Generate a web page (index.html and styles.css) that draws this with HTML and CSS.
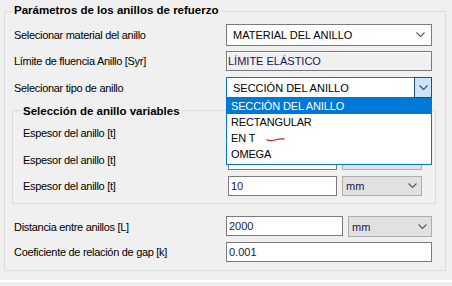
FILE: index.html
```html
<!DOCTYPE html>
<html>
<head>
    <link rel="stylesheet" href="styles.css">
</head>
<body>
    <div class="group outer">
        <div class="group-title">Parámetros de los anillos de refuerzo</div>

        <div class="row r1">
            <label class="lbl">Selecionar material del anillo</label>
            <div class="combo w-full h22">
                <span class="combo-text">MATERIAL DEL ANILLO</span>
                <span class="arrow"><svg width="9" height="5" viewBox="0 0 9 5"><polyline points="0.5,0.5 4.5,4.5 8.5,0.5" fill="none" stroke="#5a5a5a" stroke-width="1.1"/></svg></span>
            </div>
        </div>

        <div class="row r2">
            <label class="lbl">Límite de fluencia Anillo [Syr]</label>
            <div class="readonly w-full">LÍMITE ELÁSTICO</div>
        </div>

        <div class="row r3">
            <label class="lbl">Selecionar tipo de anillo</label>
            <div class="combo focus w-full h21">
                <span class="combo-text">SECCIÓN DEL ANILLO</span>
                <span class="btn"><svg width="9" height="5" viewBox="0 0 9 5"><polyline points="0.5,0.5 4.5,4.5 8.5,0.5" fill="none" stroke="#4a4a4a" stroke-width="1.1"/></svg></span>
                <ul class="list">
                    <li class="sel">SECCIÓN DEL ANILLO</li>
                    <li>RECTANGULAR</li>
                    <li>EN T <svg class="squiggle" width="19" height="5" viewBox="0 0 19 5"><path d="M0.5,2.5 Q4,4.5 9,3 T18.5,2" fill="none" stroke="#e0201c" stroke-width="1.3"/></svg></li>
                    <li>OMEGA</li>
                </ul>
            </div>
        </div>

        <div class="group inner">
            <div class="group-title">Selección de anillo variables</div>

            <div class="row i1">
                <label class="lbl">Espesor del anillo [t]</label>
                <div class="textbox w-small"></div>
                <div class="combo gray w-unit">
                    <span class="combo-text">mm</span>
                    <span class="arrow"><svg width="9" height="5" viewBox="0 0 9 5"><polyline points="0.5,0.5 4.5,4.5 8.5,0.5" fill="none" stroke="#5a5a5a" stroke-width="1.1"/></svg></span>
                </div>
            </div>
            <div class="row i2">
                <label class="lbl">Espesor del anillo [t]</label>
                <div class="textbox w-small"></div>
                <div class="combo gray w-unit">
                    <span class="combo-text">mm</span>
                    <span class="arrow"><svg width="9" height="5" viewBox="0 0 9 5"><polyline points="0.5,0.5 4.5,4.5 8.5,0.5" fill="none" stroke="#5a5a5a" stroke-width="1.1"/></svg></span>
                </div>
            </div>
            <div class="row i3">
                <label class="lbl">Espesor del anillo [t]</label>
                <div class="textbox w-small">10</div>
                <div class="combo gray w-unit">
                    <span class="combo-text">mm</span>
                    <span class="arrow"><svg width="9" height="5" viewBox="0 0 9 5"><polyline points="0.5,0.5 4.5,4.5 8.5,0.5" fill="none" stroke="#5a5a5a" stroke-width="1.1"/></svg></span>
                </div>
            </div>
        </div>

        <div class="row r4">
            <label class="lbl">Distancia entre anillos [L]</label>
            <div class="textbox w-mid">2000</div>
            <div class="combo gray w-unit2 h21">
                <span class="combo-text">mm</span>
                <span class="arrow"><svg width="9" height="5" viewBox="0 0 9 5"><polyline points="0.5,0.5 4.5,4.5 8.5,0.5" fill="none" stroke="#5a5a5a" stroke-width="1.1"/></svg></span>
            </div>
        </div>

        <div class="row r5">
            <label class="lbl">Coeficiente de relación de gap [k]</label>
            <div class="textbox w-full">0.001</div>
        </div>
    </div>

    <div class="separator"></div>
</body>
</html>
```

FILE: styles.css
```css
body {
    margin: 0;
    background-color: #f0f0f0;
    font-family: "Liberation Sans", Arial, sans-serif;
    font-size: 11px;
    color: #000;
    width: 452px;
    height: 286px;
    overflow: hidden;
}

.group {
    border: 1px solid #dcdcdc;
    box-sizing: border-box;
}
.group-title {
    display: table;
    background-color: #f0f0f0;
    font-weight: bold;
    font-size: 11.5px;
    line-height: 13px;
    padding: 0 2px 0 1px;
}

.outer {
    margin: 11px 0 0 4px;
    width: 442px;
    padding: 0 0 8px 7px;
}
.outer > .group-title {
    margin: -8px 0 0 1px;
}

.inner {
    margin-top: 12px;
    width: 424px;
    padding: 0 0 7px 10px;
}
.inner > .group-title {
    margin: -6px 0 0 -1px;
}

.row {
    display: flex;
    align-items: flex-start;
}
.lbl {
    flex: 0 0 214px;
    padding-left: 2px;
    box-sizing: border-box;
    letter-spacing: -0.3px;
    white-space: nowrap;
    align-self: center;
}
.inner .lbl {
    flex-basis: 205px;
    padding-left: 0;
}

.r1 { margin-top: 7px; }
.r2 { margin-top: 5px; }
.r3 { margin-top: 6px; }
.i1 { margin-top: 5px; }
.i2 { margin-top: 7px; }
.i3 { margin-top: 6px; }
.r4 { margin-top: 12px; }
.r5 { margin-top: 5px; }

.textbox, .readonly, .combo {
    box-sizing: border-box;
    height: 20px;
    border: 1px solid #7a7a7a;
    background-color: #fff;
    line-height: 18px;
    white-space: nowrap;
}
.textbox {
    color: #15155a;
    padding-left: 2px;
}
.readonly {
    background-color: #f0f0f0;
    box-shadow: inset 1px 1px 0 #fff;
    color: #15155a;
    padding-left: 1px;
}

.w-full { width: 206px; }
.w-small { width: 109px; }
.w-unit { width: 80px; margin-left: 5px; }
.w-mid { width: 117px; }
.w-unit2 { width: 84px; margin-left: 5px; }
.combo.h22 { height: 22px; }
.combo.h21 { height: 21px; }

.combo {
    display: flex;
    align-items: center;
    position: relative;
}
.combo-text {
    flex: 1;
    padding-left: 6px;
}
.arrow {
    width: 15px;
    display: flex;
    justify-content: flex-start;
    padding-bottom: 1px;
}
.combo.gray {
    background-color: #e1e1e1;
    border-color: #adadad;
    color: #15155a;
}
.combo.gray .combo-text {
    padding-left: 3px;
}
.combo.gray .arrow {
    width: 13px;
}

.combo.focus {
    border-color: #0078d7;
}
.btn {
    align-self: stretch;
    width: 16px;
    margin: -1px -1px -1px 0;
    border: 1px solid #1e5286;
    background-color: #cce4f7;
    display: flex;
    align-items: center;
    justify-content: center;
}

/* open dropdown list */
.list {
    position: absolute;
    top: 100%;
    left: -1px;
    width: 206px;
    box-sizing: border-box;
    margin: 1px 0 0;
    padding: 0 0 2px;
    list-style: none;
    background-color: #fff;
    border: 1px solid #0078d7;
    border-top: none;
    z-index: 5;
}
.list li {
    height: 16px;
    line-height: 17px;
    padding-left: 4px;
    letter-spacing: -0.15px;
}
.list li.sel {
    background-color: #0078d7;
    color: #fff;
}
.squiggle {
    margin-left: 8px;
    vertical-align: middle;
}

.separator {
    margin-top: 9px;
    height: 2px;
    background-color: #fff;
}
```
